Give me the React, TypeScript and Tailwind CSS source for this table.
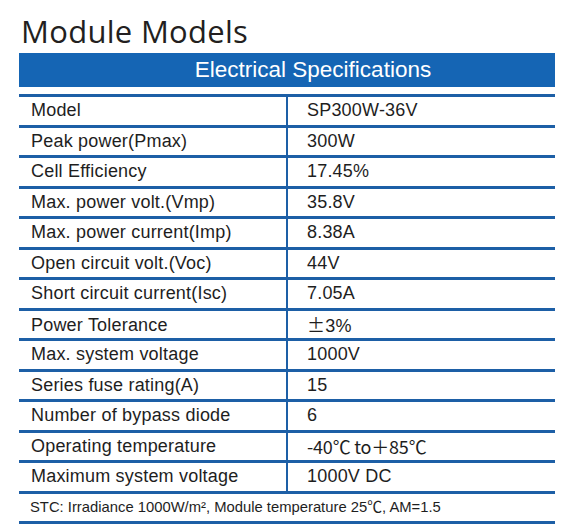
export default function App() {
  const rows = [
    ["Model", "SP300W-36V"],
    ["Peak power(Pmax)", "300W"],
    ["Cell Efficiency", "17.45%"],
    ["Max. power volt.(Vmp)", "35.8V"],
    ["Max. power current(Imp)", "8.38A"],
    ["Open circuit volt.(Voc)", "44V"],
    ["Short circuit current(Isc)", "7.05A"],
    ["Power Tolerance", "±3%"],
    ["Max. system voltage", "1000V"],
    ["Series fuse rating(A)", "15"],
    ["Number of bypass diode", "6"],
    ["Operating temperature", "-40℃ to＋85℃"],
    ["Maximum system voltage", "1000V DC"],
  ]

  const renderValue = (value: string) => {
    if (value.startsWith("±")) {
      return (
        <span>
          <span className="font-['Noto_Sans_CJK_SC',sans-serif]">±</span>3%
        </span>
      )
    }
    if (value.includes("℃")) {
      return <span className="font-['Noto_Sans_CJK_SC',sans-serif] text-[18px] tracking-[-0.2px]">{value}</span>
    }
    return value
  }

  return (
    <div className="w-[568px] h-[529px] bg-white pl-[19px] pt-[12px] font-['Liberation_Sans','Noto_Sans_CJK_SC',sans-serif]">
      <h1 className="pl-[2px] text-[31px] leading-[38px] tracking-[0.3px] text-[#231f20] font-['Open_Sans',sans-serif]">Module Models</h1>
      <div className="w-[536px]">
        <div className="mt-[3px] h-[34px] bg-[#1565b4] flex items-center justify-center pl-[52px] text-white text-[22.5px]">
          Electrical Specifications
        </div>
        <div className="mt-[7px] border-t-[3px] border-[#1d5fa6]">
          {rows.map(([label, value]) => (
            <div key={label} className="grid grid-cols-[269px_1fr] h-[30.5px] border-b-[3px] border-[#1d5fa6] text-[18px] tracking-[0.2px] text-[#1e1e1e]">
              <div className="border-r-[2.5px] border-[#1d5fa6] pl-[12px] flex items-center">{label}</div>
              <div className="pl-[19px] flex items-center">{renderValue(value)}</div>
            </div>
          ))}
          <div className="h-[30.5px] border-b-[3px] border-[#1d5fa6] pl-[11px] flex items-center text-[14.8px] text-[#1e1e1e]">
            STC: Irradiance 1000W/m², Module temperature 25℃, AM=1.5
          </div>
        </div>
      </div>
    </div>
  )
}
